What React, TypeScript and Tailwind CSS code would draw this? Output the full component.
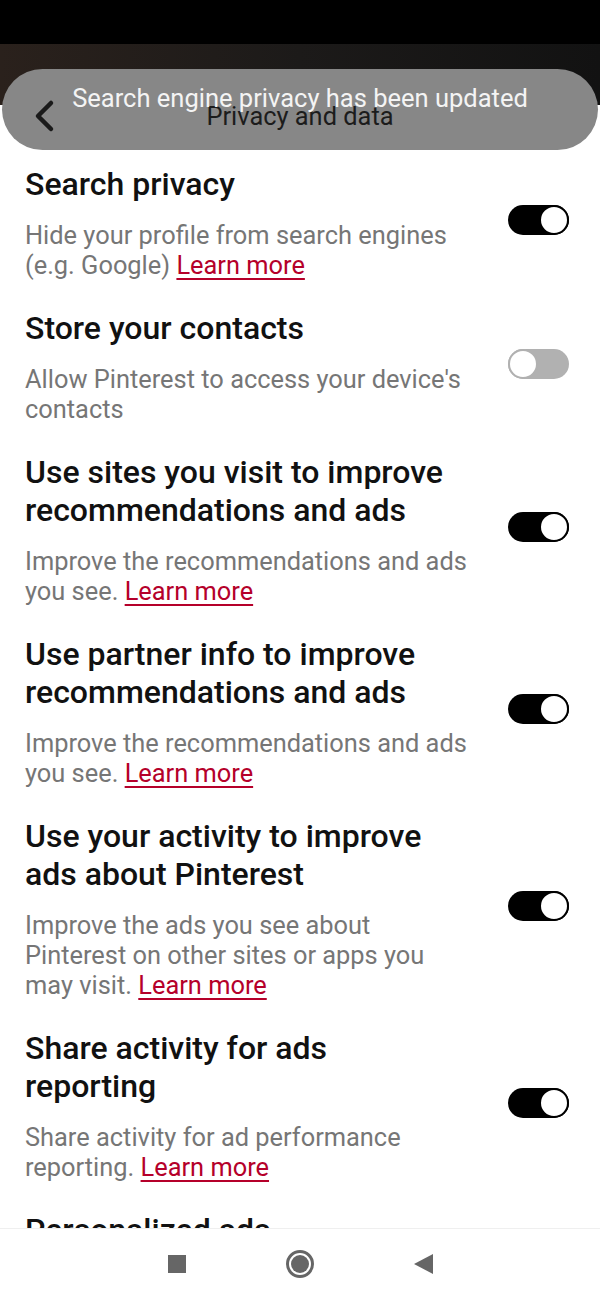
import React from "react";

type Setting = {
  title: string[];
  desc: string[];
  link?: boolean;
  on: boolean;
};

const settings: Setting[] = [
  {
    title: ["Search privacy"],
    desc: ["Hide your profile from search engines", "(e.g. Google)"],
    link: true,
    on: true,
  },
  {
    title: ["Store your contacts"],
    desc: ["Allow Pinterest to access your device's", "contacts"],
    on: false,
  },
  {
    title: ["Use sites you visit to improve", "recommendations and ads"],
    desc: ["Improve the recommendations and ads", "you see."],
    link: true,
    on: true,
  },
  {
    title: ["Use partner info to improve", "recommendations and ads"],
    desc: ["Improve the recommendations and ads", "you see."],
    link: true,
    on: true,
  },
  {
    title: ["Use your activity to improve", "ads about Pinterest"],
    desc: [
      "Improve the ads you see about",
      "Pinterest on other sites or apps you",
      "may visit.",
    ],
    link: true,
    on: true,
  },
  {
    title: ["Share activity for ads", "reporting"],
    desc: ["Share activity for ad performance", "reporting."],
    link: true,
    on: true,
  },
  {
    title: ["Personalized ads"],
    desc: ["Allow Pinterest to personalize ads"],
    on: true,
  },
];

const Toggle = ({ on }: { on: boolean }) =>
  on ? (
    <div className="flex h-[30px] w-[61px] shrink-0 items-center justify-end rounded-full bg-black">
      <div className="h-[30px] w-[30px] rounded-full border-2 border-black bg-white" />
    </div>
  ) : (
    <div className="flex h-[30px] w-[61px] shrink-0 items-center justify-start rounded-full bg-[#b1b1b1]">
      <div className="h-[30px] w-[30px] rounded-full border-2 border-[#b1b1b1] bg-white" />
    </div>
  );

const SettingRow = ({ item }: { item: Setting }) => (
  <div className="flex items-center justify-between pb-[29px]">
    <div className="flex flex-col gap-[17px]">
      <h3 className="text-[32px] leading-[38px] font-medium text-[#111111]">
        {item.title.map((line) => (
          <span key={line} className="block whitespace-nowrap">
            {line}
          </span>
        ))}
      </h3>
      <p className="text-[25.4px] leading-[30px] text-[#767676]">
        {item.desc.map((line, i) => (
          <span key={line} className="block whitespace-nowrap">
            {line}
            {item.link && i === item.desc.length - 1 && (
              <>
                {" "}
                <span className="text-[#b5002a] underline decoration-[1.5px] underline-offset-[4px]">
                  Learn more
                </span>
              </>
            )}
          </span>
        ))}
      </p>
    </div>
    <div className="-mt-[5px]">
      <Toggle on={item.on} />
    </div>
  </div>
);

export default function App() {
  return (
    <div
      className="flex h-[1300px] w-[600px] flex-col overflow-hidden bg-white"
      style={{ fontFamily: "Roboto, 'Noto Sans', sans-serif" }}
    >
      <div className="h-[44px] shrink-0 bg-black" />

      {/* header with the toast lying over it */}
      <div className="relative h-[121px] shrink-0">
        <div className="h-[61px] bg-gradient-to-r from-[#2a211c] via-[#1c1a19] to-[#121212]" />
        <div className="absolute left-[2px] right-[2px] top-[25px] h-[81px] rounded-full bg-[#878787]" />
        <div className="absolute left-[33px] top-[55px]">
          <svg width="24" height="34" viewBox="0 0 24 34">
            <path
              d="M18 4 L5 17 L18 30"
              fill="none"
              stroke="#1a1a1a"
              strokeWidth="4.5"
              strokeLinecap="round"
              strokeLinejoin="round"
            />
          </svg>
        </div>
        <div className="absolute left-0 right-0 top-[57px] text-center text-[25.4px] leading-[30px] text-[#1c1c1c]">
          Privacy and data
        </div>
        <div className="absolute left-0 right-0 top-[36px] text-center text-[25.5px] leading-[36px] text-[#f4f4f4]">
          Search engine privacy has been updated
        </div>
      </div>

      <div className="min-h-0 flex-1 overflow-hidden pl-[25px] pr-[31px]">
        {settings.map((item) => (
          <SettingRow key={item.title.join(" ")} item={item} />
        ))}
      </div>

      <div className="flex h-[72px] shrink-0 items-center justify-center gap-[100px] border-t border-[#efefef] bg-white pb-[1px]">
        <div className="h-[18px] w-[18px] bg-[#666666]" />
        <div className="flex h-[28px] w-[28px] items-center justify-center rounded-full border-[3px] border-[#666666]">
          <div className="h-[18px] w-[18px] rounded-full bg-[#666666]" />
        </div>
        <svg width="19" height="20" viewBox="0 0 19 20">
          <path d="M19 0 L19 20 L0 10 Z" fill="#666666" />
        </svg>
      </div>
    </div>
  );
}
